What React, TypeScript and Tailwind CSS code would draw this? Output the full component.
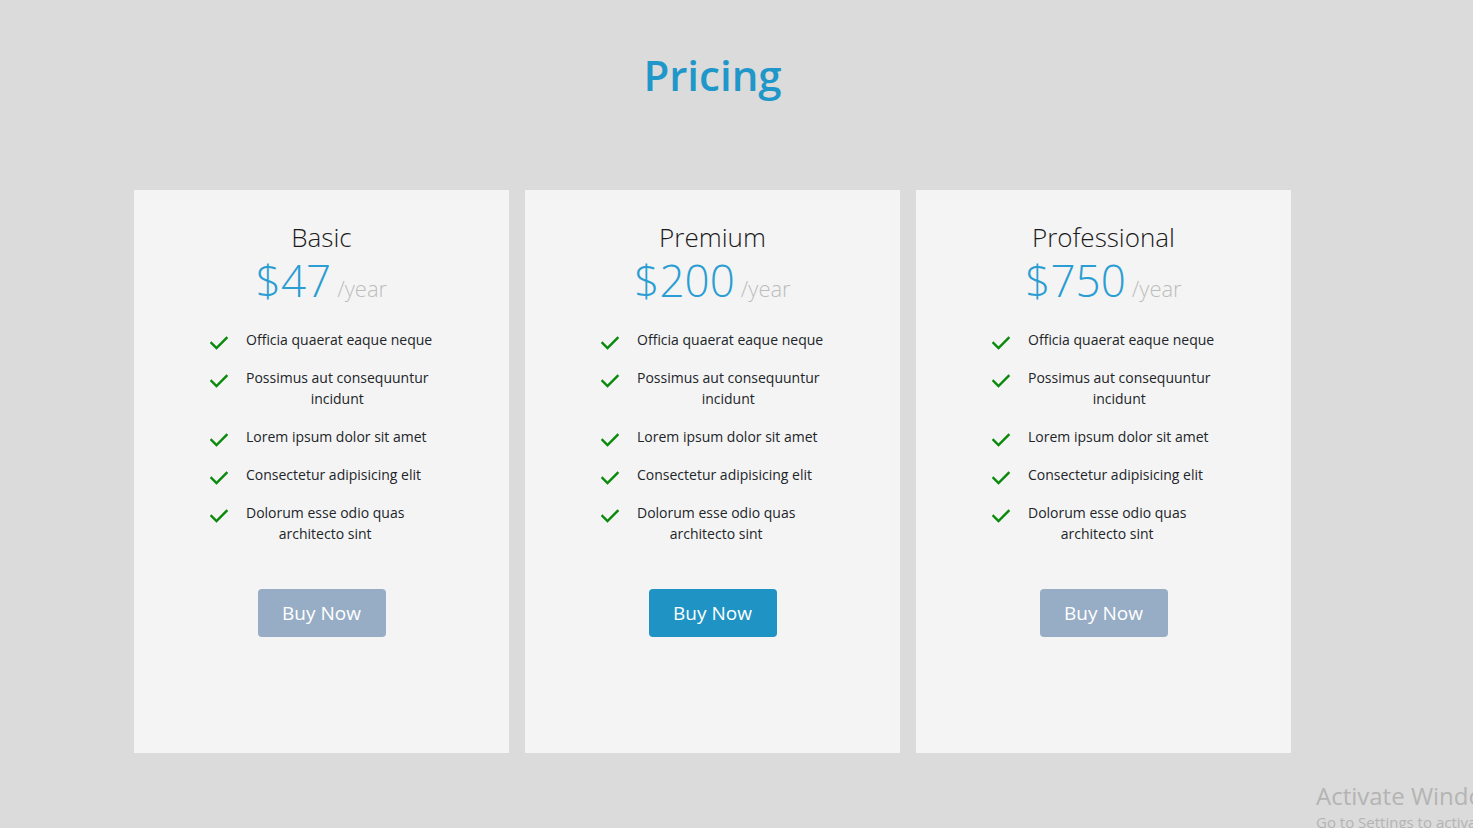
import React from "react";

type Plan = {
  name: string;
  price: string;
  highlight: boolean;
};

const plans: Plan[] = [
  { name: "Basic", price: "$47", highlight: false },
  { name: "Premium", price: "$200", highlight: true },
  { name: "Professional", price: "$750", highlight: false },
];

const features: string[][] = [
  ["Officia quaerat eaque neque"],
  ["Possimus aut consequuntur", "incidunt"],
  ["Lorem ipsum dolor sit amet"],
  ["Consectetur adipisicing elit"],
  ["Dolorum esse odio quas", "architecto sint"],
];

const Check = () => (
  <svg
    width="18"
    height="14"
    viewBox="0 0 18 14"
    className="shrink-0 mt-[7px]"
    fill="none"
  >
    <polyline
      points="1.5,7 6.5,12 16.5,2"
      stroke="#0a8a0a"
      strokeWidth="2.4"
      strokeLinecap="square"
    />
  </svg>
);

const PlanCard = ({ name, price, highlight }: Plan) => {
  return (
    <div className="w-[375px] h-[563px] bg-[#f4f4f4] flex flex-col items-center pt-[32px]">
      {/* HEADER */}
      <h3 className="text-[26px] leading-[30px] font-light text-[#1a1a1a]">
        {name}
      </h3>
      <div className="flex items-baseline leading-[44px] mt-[6px]">
        <span className="text-[44px] font-light text-[#2a9dd2]">{price}</span>
        <span className="text-[22px] font-light text-[#bdbdbd] ml-[6px]">
          /year
        </span>
      </div>

      {/* FEATURES */}
      <ul className="self-start ml-[76px] mt-[19px] flex flex-col gap-[17px]">
        {features.map((lines, i) => (
          <li key={i} className="flex items-start gap-[18px]">
            <Check />
            <span className="text-[14px] leading-[21px] text-center text-[#212529]">
              {lines.map((l, j) => (
                <React.Fragment key={j}>
                  {j > 0 && <br />}
                  {l}
                </React.Fragment>
              ))}
            </span>
          </li>
        ))}
      </ul>

      <button
        className={`mt-[45px] w-[128px] h-[48px] rounded-[4px] text-white text-[19px] ${
          highlight ? "bg-[#1e93c4]" : "bg-[#97adc5]"
        }`}
      >
        Buy Now
      </button>
    </div>
  );
};

const App = () => {
  return (
    <div
      className="relative min-h-screen w-full bg-[#dbdbdb] overflow-hidden"
      style={{ fontFamily: '"Open Sans", "Noto Sans", sans-serif' }}
    >
      <h2 className="text-center text-[42px] leading-[56px] font-semibold text-[#1f97c9] pt-[47px] pr-[48px]">
        Pricing
      </h2>

      <div className="flex gap-4 ml-[134px] mt-[87px]">
        {plans.map((p) => (
          <PlanCard key={p.name} {...p} />
        ))}
      </div>

      {/* Windows watermark */}
      <div className="absolute left-[1316px] top-[780px] whitespace-nowrap text-[#b4b4b4]">
        <div className="text-[24px] leading-[32px]">Activate Windows</div>
        <div className="text-[15px] leading-[20px]">
          Go to Settings to activate Windows.
        </div>
      </div>
    </div>
  );
};

export default App;
